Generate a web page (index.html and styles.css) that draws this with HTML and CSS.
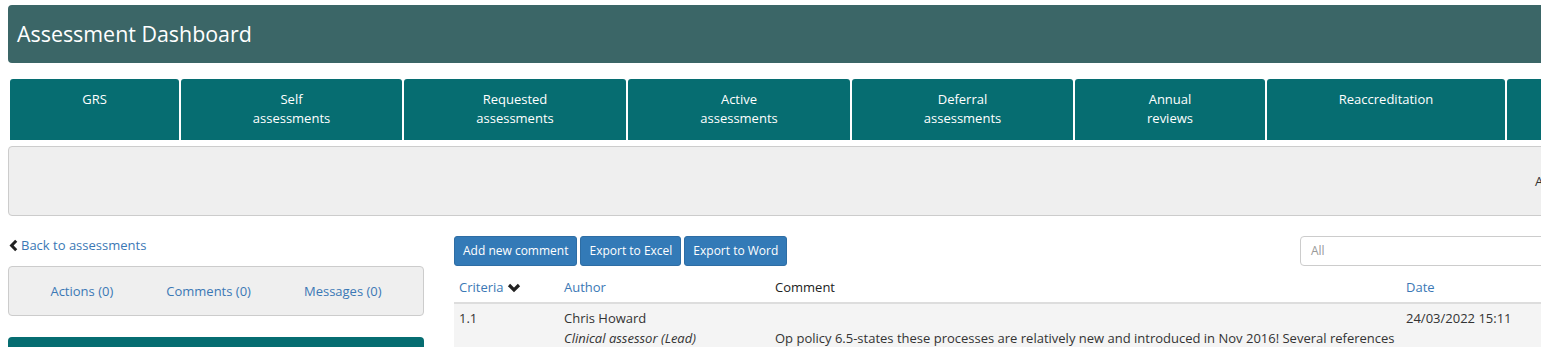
FILE: index.html
```html
<!DOCTYPE html>
<html>
<head>
<meta charset="utf-8">
<link rel="stylesheet" href="styles.css">
</head>
<body>
<div class="page">
  <header class="topbar"><h1>Assessment Dashboard</h1></header>

  <nav class="tabs">
    <div class="tab t1">GRS</div>
    <div class="tab t2">Self<br>assessments</div>
    <div class="tab t3">Requested<br>assessments</div>
    <div class="tab t4">Active<br>assessments</div>
    <div class="tab t5">Deferral<br>assessments</div>
    <div class="tab t6">Annual<br>reviews</div>
    <div class="tab t7">Reaccreditation</div>
    <div class="tab t8">Archive</div>
  </nav>

  <div class="infopanel"><span class="infotext">Assessment information</span></div>

  <div class="main">
    <aside class="side">
      <a class="back" href="#"><svg class="chev-left" viewBox="0 0 9 13" width="9" height="13"><polyline points="7.2,1.8 2.6,6.5 7.2,11.2" fill="none" stroke="#222" stroke-width="3"/></svg>Back to assessments</a>
      <div class="sidenav">
        <a href="#">Actions (0)</a>
        <a href="#">Comments (0)</a>
        <a href="#">Messages (0)</a>
      </div>
      <div class="sidebox"></div>
    </aside>

    <section class="content">
      <div class="toolbar">
        <div class="btns">
          <button class="btn">Add new comment</button>
          <button class="btn">Export to Excel</button>
          <button class="btn">Export to Word</button>
        </div>
        <div class="select">All</div>
      </div>

      <table class="grid">
        <thead>
          <tr>
            <th class="c1"><a href="#">Criteria</a><svg class="chev-down" viewBox="0 0 14 10" width="14" height="10"><polyline points="2,2 7,7 12,2" fill="none" stroke="#222" stroke-width="3.2"/></svg></th>
            <th class="c2"><a href="#">Author</a></th>
            <th class="c3">Comment</th>
            <th class="c4"><a href="#">Date</a></th>
          </tr>
        </thead>
        <tbody>
          <tr>
            <td>1.1</td>
            <td>Chris Howard<br><em>Clinical assessor (Lead)</em></td>
            <td><p class="ctext">Op policy 6.5-states these processes are relatively new and introduced in Nov 2016! Several references made to the policy throughout the document.</p></td>
            <td>24/03/2022 15:11</td>
          </tr>
        </tbody>
      </table>
    </section>
  </div>
</div>
</body>
</html>
```

FILE: styles.css
```css
html, body {
  margin: 0;
  padding: 0;
  overflow: hidden;
  background: #fff;
}
body {
  font-family: "Open Sans", "Liberation Sans", sans-serif;
  font-size: 14px;
  line-height: 20px;
  color: #333;
}
.page {
  width: 1700px;
  padding: 5px 0 0 8px;
}
.topbar {
  height: 58px;
  background: #3b6667;
  border-radius: 4px;
  display: flex;
  align-items: center;
  padding-left: 9px;
}
.topbar h1 {
  margin: 0;
  font-size: 21.4px;
  font-weight: 400;
  color: #fff;
  line-height: 28px;
}
.tabs {
  display: flex;
  gap: 2px;
  margin-top: 16px;
  padding-left: 2px;
}
.tab {
  height: 61px;
  background: #066d71;
  color: #fff;
  text-align: center;
  border-radius: 3px 3px 0 0;
  padding-top: 11px;
  box-sizing: border-box;
  font-size: 13px;
  line-height: 19px;
  flex: none;
}
.t1 { width: 169px; }
.t2 { width: 221px; }
.t3 { width: 222px; }
.t4 { width: 222px; }
.t5 { width: 221px; }
.t6 { width: 190px; }
.t7 { width: 238px; }
.t8 { width: 200px; }
.infopanel {
  margin-top: 6px;
  height: 70px;
  box-sizing: border-box;
  background: #efefef;
  border: 1px solid #ccc;
  border-radius: 4px;
  display: flex;
  align-items: center;
  justify-content: flex-end;
}
.infotext {
  width: 172px;
  font-size: 13px;
}
.main {
  display: flex;
  gap: 30px;
  margin-top: 20px;
}
.side {
  width: 416px;
  flex: none;
}
a {
  color: #3b78b5;
  text-decoration: none;
}
.back {
  display: flex;
  align-items: center;
  gap: 3px;
  padding-left: 1px;
  font-size: 13px;
  line-height: 20px;
  margin-top: -1px;
}
.sidenav {
  margin-top: 11px;
  height: 50px;
  box-sizing: border-box;
  background: #efefef;
  border: 1px solid #ccc;
  border-radius: 4px;
  display: flex;
  align-items: center;
  justify-content: center;
  gap: 53px;
  font-size: 13px;
}
.sidebox {
  margin-top: 21px;
  height: 60px;
  background: #066d71;
  border-radius: 4px 4px 0 0;
}
.content {
  width: 1150px;
  flex: none;
}
.toolbar {
  display: flex;
  justify-content: space-between;
  align-items: flex-start;
}
.btns {
  display: flex;
  gap: 3px;
}
.btn {
  font-family: "Open Sans", "Liberation Sans", sans-serif;
  font-size: 12px;
  height: 30px;
  padding: 0 8px;
  background: #337ab7;
  border: 1px solid #2e6da4;
  border-radius: 3px;
  color: #fff;
  line-height: 18px;
}
.select {
  width: 304px;
  height: 30px;
  box-sizing: border-box;
  border: 1px solid #ccc;
  border-radius: 4px;
  font-size: 12px;
  color: #999;
  padding: 5px 10px;
  line-height: 18px;
}
.grid {
  margin-top: 6px;
  border-collapse: collapse;
  width: 100%;
  font-size: 13px;
  table-layout: fixed;
}
.grid th {
  text-align: left;
  font-weight: 400;
  color: #222;
  padding: 5px;
  border-bottom: 2px solid #ddd;
  line-height: 20px;
}
.c1 { width: 95px; }
.c2 { width: 201px; }
.c3 { width: 621px; }
.chev-down {
  margin-left: 3px;
  vertical-align: -1px;
}
.grid td {
  background: #f4f4f4;
  padding: 4px 5px 5px;
  vertical-align: top;
  line-height: 20px;
}
.grid td em {
  font-style: italic;
}
.ctext {
  margin: 20px 0 0 0;
}
```
